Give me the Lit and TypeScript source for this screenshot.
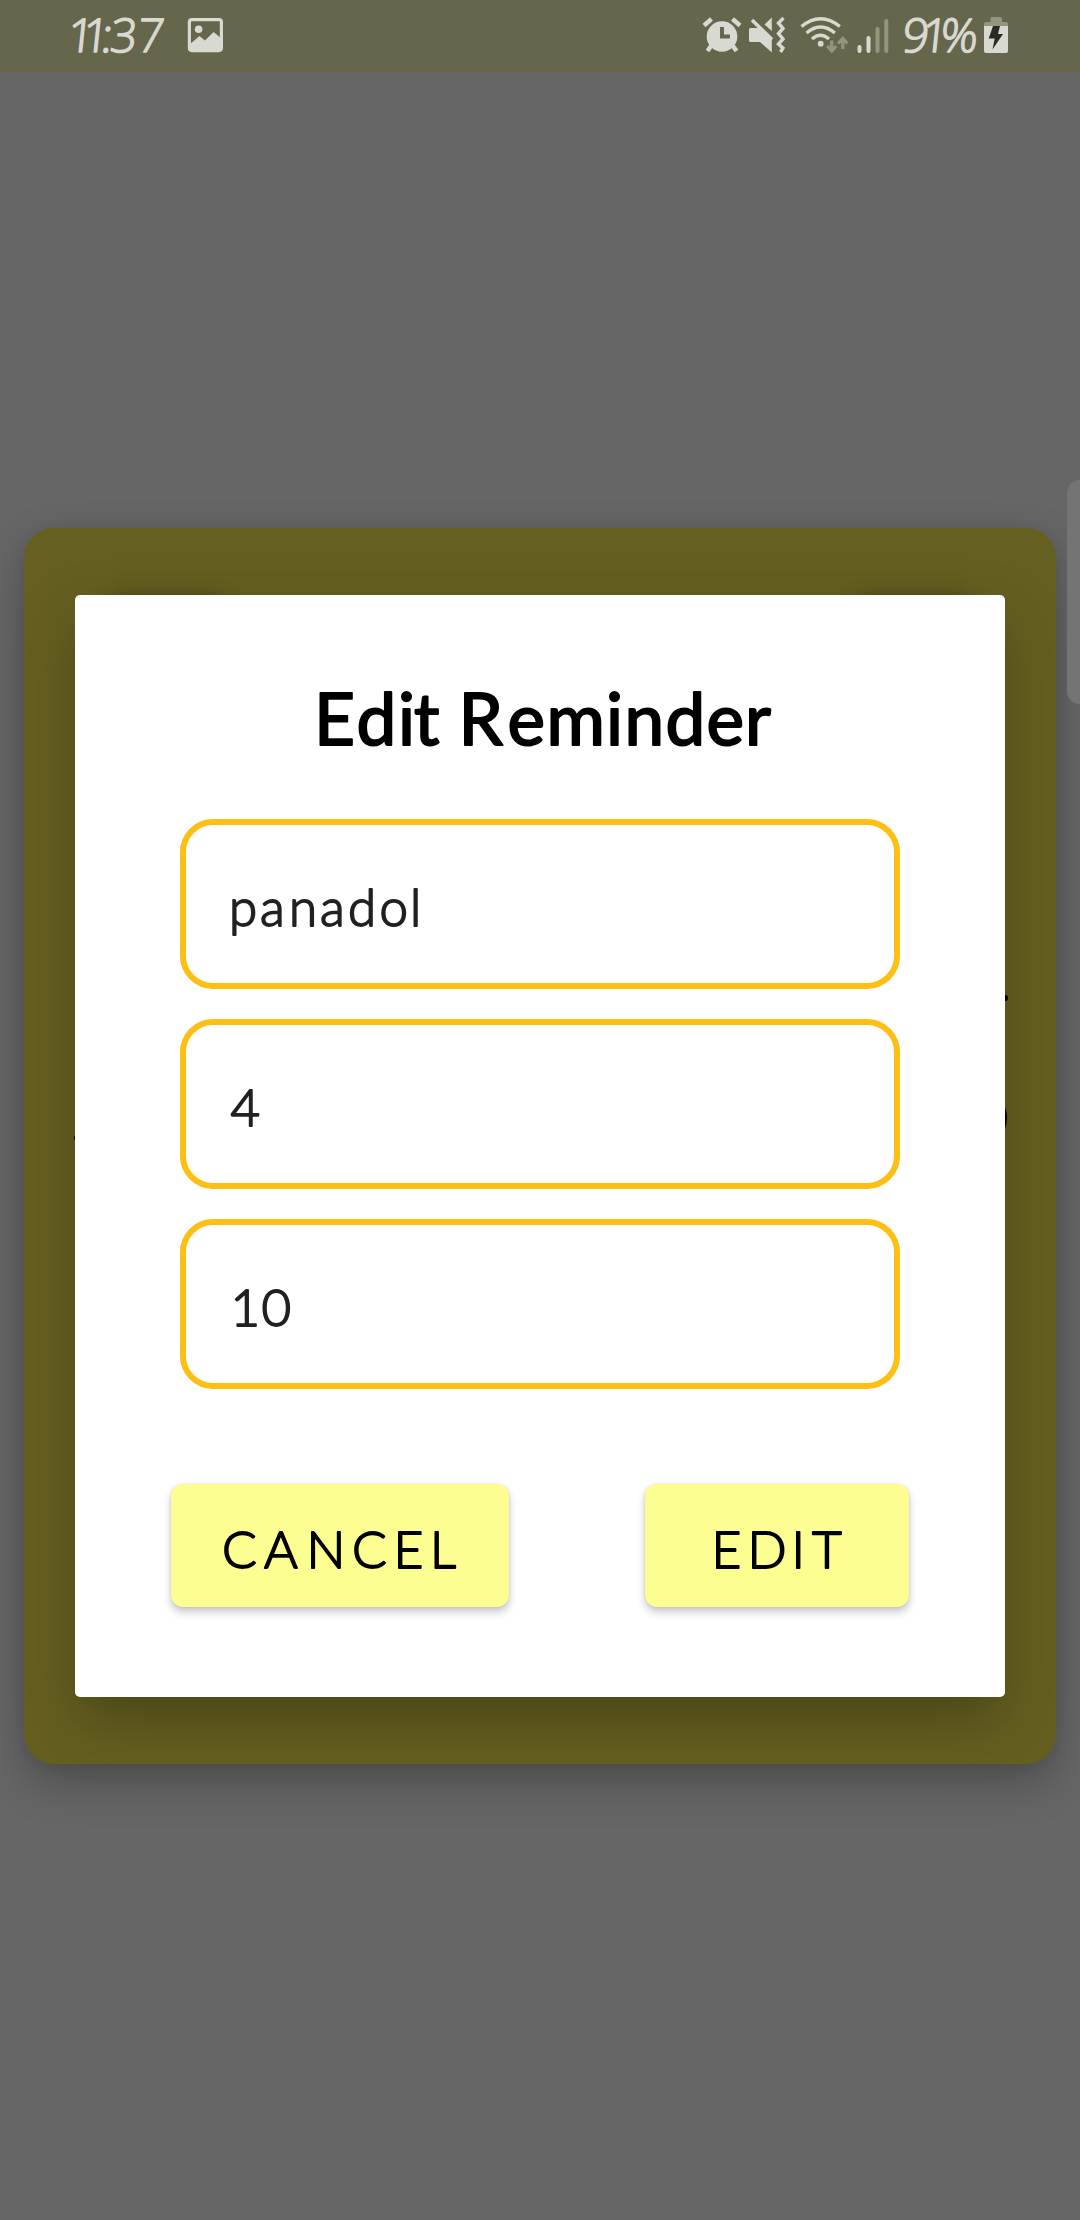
import { LitElement, html, css, svg } from "lit";
import { customElement, property } from "lit/decorators.js";

/** Text with softened stroke ends; `xs` holds the start of each glyph. */
@customElement("soft-text")
export class SoftText extends LitElement {
  @property() text = "";
  @property() xs = "";
  @property({ type: Number }) w = 100;
  @property({ type: Number }) h = 60;
  @property({ type: Number }) base = 50;

  static styles = css`
    :host { display: block; color: inherit; }
    svg { display: block; overflow: visible; }
    text {
      fill: currentColor;
      stroke: currentColor;
      stroke-width: var(--soft, 1.8px);
      stroke-linejoin: round;
      font: inherit;
      white-space: pre;
    }
  `;

  render() {
    return html`<svg width=${this.w} height=${this.h} viewBox="0 0 ${this.w} ${this.h}">
      ${svg`<text x=${this.xs} y=${this.base}>${this.text}</text>`}
    </svg>`;
  }
}

@customElement("status-bar")
export class StatusBar extends LitElement {
  static styles = css`
    :host {
      display: flex;
      justify-content: space-between;
      height: 72px;
      background: #66664d;
      color: #d8d9d0;
    }
    .side { display: block; }
    .time {
      font: 300 46.5px "Open Sans", sans-serif;
      fill: #d8d9d0;
      stroke: #d8d9d0;
      stroke-width: 1.5px;
      stroke-linejoin: round;
    }
  `;

  render() {
    return html`
      <svg class="side" width="280" height="72" viewBox="0 0 280 72">
        <text class="time" transform="translate(5.5 0) skewX(-6)" x="66 81 100 109 136" y="52">11:37</text>
        <rect x="189.4" y="19.6" width="32" height="31" rx="2.5" fill="none" stroke="#d8d9d0" stroke-width="3.2"/>
        <circle cx="198.6" cy="29.3" r="3.8" fill="#d8d9d0"/>
        <path d="M189.5 44.5L199.5 36L205 40.5L213.5 32L221.5 38.5V50.5H189.5Z" fill="#d8d9d0"/>
      </svg>
      <svg class="side" width="390" height="72" viewBox="690 0 390 72">
        <g fill="#d8d9d0">
          <circle cx="722" cy="36.5" r="15.3"/>
          <path d="M711 46L707.5 51M733 46L736.5 51M704 25.5L711.5 19M740 25.5L732.5 19" stroke="#d8d9d0" stroke-width="4.4" fill="none"/>
          <path d="M722 27V36.5H730" fill="none" stroke="#66664d" stroke-width="4"/>
        </g>
        <g fill="#d8d9d0">
          <path d="M750.5 28H761L771.8 38V52.5L760 42H750.5Q749 42 749 40.5V29.5Q749 28 750.5 28Z"/>
          <path d="M764.5 24.5L771.8 17.5V31Z"/>
          <path d="M752 20L772 39.5" stroke="#d8d9d0" stroke-width="3.6"/>
          <path d="M783.5 18L778.5 23L783 28.5L778.5 33.5L783 39L778.5 44L783 48L780.5 52" fill="none" stroke="#d8d9d0" stroke-width="3.4"/>
        </g>
        <g fill="none" stroke="#d8d9d0" stroke-width="3.4">
          <path d="M801.5 26.5Q820.5 11 839.8 26.5"/>
          <path d="M806.5 33Q820.5 21 834.8 33"/>
          <path d="M812 39Q820.5 31.5 829 39"/>
        </g>
        <circle cx="820.7" cy="43.7" r="2.9" fill="#d8d9d0"/>
        <path d="M831.7 40.5V50.5M827.2 46L831.7 51L836.2 46M842.8 49V39M838.2 43.5L842.8 38.5L847.3 43.5" fill="none" stroke="#94957f" stroke-width="3.2"/>
        <g stroke-width="4" stroke-linecap="round">
          <path d="M859.5 47V51M868.5 38V51" stroke="#d8d9d0"/>
          <path d="M877.5 29V51M886.3 21V51" stroke="#94957f"/>
        </g>
        <text class="time" transform="translate(5.5 0) skewX(-6)" x="901 920 939" y="52">91%</text>
        <path d="M984 26V24Q984 22 986 22H990.5V18.5Q990.5 17 992 17H1000.5Q1002 17 1002 18.5V22H1006Q1008 22 1008 24V26Z" fill="#94957f"/>
        <path d="M984 26H1008V51Q1008 53 1006 53H986Q984 53 984 51Z" fill="#d8d9d0"/>
        <path d="M993 26H1000L998 34H1003L992.5 49.5L994.7 38.5H988.7Z" fill="#2b2b26"/>
      </svg>
    `;
  }
}

@customElement("app-root")
export class AppRoot extends LitElement {
  static styles = css`
    :host {
      display: flex;
      flex-direction: column;
      position: relative;
      width: 1080px;
      height: 2220px;
      overflow: hidden;
      background: #666;
      font-family: Lato, sans-serif;
    }
    .stage {
      display: grid;
      padding: 456px 24px 0;
    }
    .card, .dialog { grid-area: 1 / 1; }
    .card {
      position: relative;
      display: flex;
      justify-content: space-between;
      align-items: flex-start;
      box-sizing: border-box;
      height: 1236px;
      padding: 74px 88px 0;
      border-radius: 30px;
      background: #656020;
      box-shadow: 0 18px 44px rgba(0, 0, 0, 0.25), 0 0 14px rgba(0, 0, 0, 0.06);
    }
    .chip {
      width: 112px;
      height: 60px;
      border-radius: 12px;
      background: #656020;
      box-shadow: 0 0 20px 2px rgba(0, 0, 0, 0.45);
    }
    .speck { position: absolute; background: #000; }
    .speck.dot { left: 978px; top: 467px; width: 6px; height: 6px; border-radius: 3px; }
    .speck.curve { left: 971px; top: 576px; width: 12px; height: 28px; border-radius: 50%; }
    .speck.tick { left: 50px; top: 608px; width: 3px; height: 4px; border-radius: 2px; }
    .dialog {
      position: relative;
      display: flex;
      flex-direction: column;
      align-items: center;
      box-sizing: border-box;
      width: 930px;
      height: 1102px;
      margin: 67px 0 0 51px;
      padding-top: 75px;
      border-radius: 5px;
      background: #fff;
      box-shadow: 0 26px 60px rgba(0, 0, 0, 0.26);
    }
    .title {
      --soft: 2px;
      width: 720px;
      height: 149px;
      font: 400 71px Lato, sans-serif;
      color: #000;
    }
    .fields {
      display: flex;
      flex-direction: column;
      gap: 30px;
    }
    .field {
      box-sizing: border-box;
      width: 720px;
      height: 170px;
      border: 6px solid #fdbf14;
      border-radius: 33px;
      font: 300 51px Lato, sans-serif;
      color: #212121;
    }
    .actions {
      display: flex;
      justify-content: space-between;
      width: 738px;
      margin-top: 95px;
    }
    .btn {
      display: block;
      height: 123px;
      padding: 0;
      border: 0;
      border-radius: 12px;
      background: #fdfe92;
      color: #000;
      font: 300 51.5px Lato, sans-serif;
      text-align: left;
      box-shadow: 0 5px 8px rgba(0, 0, 0, 0.22), 0 0 3px rgba(0, 0, 0, 0.1);
    }
    .cancel { width: 338px; }
    .edit { width: 264px; }
    .handle {
      position: absolute;
      right: 0;
      top: 480px;
      width: 13px;
      height: 224px;
      border-radius: 14px 0 0 14px;
      background: #747474;
    }
  `;

  render() {
    return html`
      <status-bar></status-bar>
      <main class="stage">
        <div class="card">
          <div class="chip"></div>
          <div class="chip"></div>
          <i class="speck dot"></i>
          <i class="speck curve"></i>
          <i class="speck tick"></i>
        </div>
        <section class="dialog">
          <div class="title">
            <soft-text text="Edit Reminder" w="720" h="100" base="74.5"
              xs="134 176.5 218 234 262 278.5 327.5 366.5 426 444.5 485.5 526.5 565"></soft-text>
          </div>
          <div class="fields">
            <div class="field"><soft-text text="panadol" w="700" h="150" base="100.5"
              xs="43 74 103 134 162 193.5 224"></soft-text></div>
            <div class="field"><soft-text text="4" w="700" h="150" base="100.5" xs="44.5"></soft-text></div>
            <div class="field"><soft-text text="10" w="700" h="150" base="100.5" xs="44.5 75.5"></soft-text></div>
          </div>
          <div class="actions">
            <button class="btn cancel"><soft-text text="CANCEL" w="338" h="123" base="83.5"
              xs="51 93 135.5 181 222.5 259"></soft-text></button>
            <button class="btn edit"><soft-text text="EDIT" w="264" h="123" base="83.5"
              xs="66.5 102.5 146.5 167"></soft-text></button>
          </div>
        </section>
      </main>
      <div class="handle"></div>
    `;
  }
}
